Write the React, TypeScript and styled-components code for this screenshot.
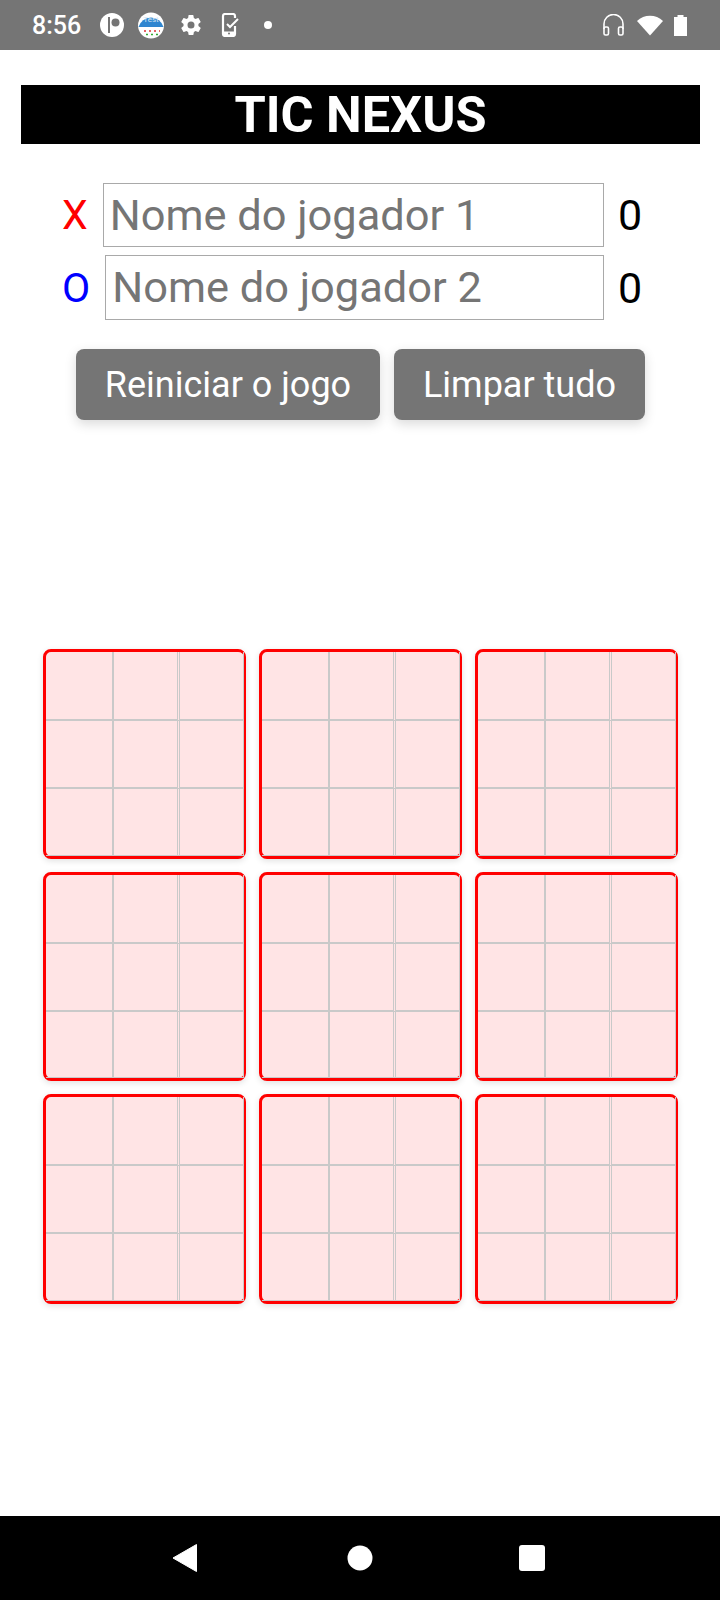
import React from 'react';
import styled, { createGlobalStyle } from 'styled-components';

const GlobalStyle = createGlobalStyle`
  html, body {
    margin: 0;
    padding: 0;
    background: #fff;
    font-family: Roboto, "Liberation Sans", sans-serif;
  }
  * { box-sizing: border-box; }
`;

const Screen = styled.div`
  width: 720px;
  height: 1600px;
  display: flex;
  flex-direction: column;
  overflow: hidden;
`;

const StatusBar = styled.div`
  height: 50px;
  flex: none;
  background: #757575;
  color: #fff;
  display: flex;
  align-items: center;
  padding: 0 33px 0 32px;
`;

const Clock = styled.span`
  width: 68px;
  font-size: 25px;
  font-weight: 500;
`;

const NotifIcons = styled.div`
  display: flex;
  align-items: center;
  gap: 14px;
`;

const SystemIcons = styled.div`
  display: flex;
  align-items: center;
  gap: 11px;
  margin-left: auto;
`;

const Main = styled.main`
  flex: 1;
  display: flex;
  flex-direction: column;
  padding-top: 35px;
`;

const Title = styled.h1`
  margin: 0 20px 0 21px;
  height: 59px;
  background: #000;
  color: #fff;
  font-size: 50.5px;
  font-weight: 700;
  line-height: 59px;
  text-align: center;
`;

const Players = styled.div`
  margin-top: 39px;
  display: flex;
  flex-direction: column;
  gap: 8px;
`;

const PlayerRow = styled.div`
  display: flex;
  align-items: center;
  padding-left: 62px;
`;

const Mark = styled.span<{ $color: string }>`
  color: ${({ $color }) => $color};
  font-size: 41px;
  line-height: 50px;
  margin-right: 15px;
`;

const NameInput = styled.input<{ $height: number }>`
  height: ${({ $height }) => $height}px;
  flex: 1;
  min-width: 0;
  border: 1px solid #a9a9a9;
  border-radius: 0;
  padding: 0 6px;
  outline: none;
  font-family: inherit;
  font-size: 43.4px;
  color: #000;
  &::placeholder { color: #757575; opacity: 1; }
`;

const Score = styled.span`
  flex: none;
  width: 102px;
  margin-left: 14px;
  font-size: 43px;
  line-height: 50px;
  color: #000;
`;

const Actions = styled.div`
  margin-top: 29px;
  padding-left: 76px;
  display: flex;
  gap: 14px;
`;

const ActionButton = styled.button<{ $width: number }>`
  width: ${({ $width }) => $width}px;
  height: 71px;
  background: #757575;
  color: #fff;
  border: none;
  border-radius: 8px;
  font-family: inherit;
  font-size: 36px;
  padding: 0;
  box-shadow: 0 4px 12px rgba(0, 0, 0, 0.15);
`;

const Boards = styled.div`
  margin-top: 229px;
  padding-left: 43px;
  display: grid;
  grid-template-columns: repeat(3, 203px);
  grid-auto-rows: 209.5px;
  column-gap: 13px;
  row-gap: 13px;
`;

const Board = styled.div`
  border: 3px solid #f00;
  border-right-width: 2px;
  border-radius: 8px;
  background: #ffe4e5;
  display: grid;
  grid-template-columns: 68px 66px 1fr;
  grid-template-rows: 69px 68px 1fr;
  box-shadow: 0 2px 6px rgba(0, 0, 0, 0.12);
`;

const colBorder = ['2px solid #c9c9c9', '3px double #c9c9c9', '1px solid #c9c9c9'];

const Cell = styled.div<{ $col: number; $row: number }>`
  border-right: ${({ $col }) => colBorder[$col]};
  border-bottom: ${({ $row }) => ($row < 2 ? '2px solid #c9c9c9' : '1px solid #c9c9c9')};
`;

const NavBar = styled.nav`
  height: 84px;
  flex: none;
  background: #000;
  display: flex;
  align-items: center;
  padding-left: 172px;
  gap: 145px;
`;

const cells = Array.from({ length: 9 }, (_, i) => i);

const App: React.FC = () => (
  <Screen>
    <GlobalStyle />
    <StatusBar>
      <Clock>8:56</Clock>
      <NotifIcons>
        <svg width="24" height="24" viewBox="0 0 24 24">
          <circle cx="12" cy="12" r="12" fill="#fff" />
          <path d="M9 4v16" stroke="#757575" strokeWidth="2" />
          <circle cx="15.500" cy="9.500" r="4" fill="#757575" />
        </svg>
        <svg width="26" height="27" viewBox="0 0 26 27">
          <circle cx="13" cy="13.500" r="13" fill="#fff" />
          <path d="M0.500 15 A13 13 0 0 1 25.500 15 Z" fill="#2f86d0" />
          <text x="13" y="10" fontSize="8" textAnchor="middle" fill="#d5e6f5" fontFamily="Roboto, sans-serif">Test</text>
          <path d="M6 19h2M11 19h2M16 19h2M21 19h1" stroke="#d33" strokeWidth="1.500" />
          <path d="M8 22.500h2M13 22.500h2M18 22.500h2" stroke="#3a3" strokeWidth="1.500" />
        </svg>
        <svg width="26" height="24" viewBox="-1 0 26 24" fill="#fff">
          <path d="M19.400 13c.04-.3.06-.65.06-1s-.02-.7-.07-1l2.100-1.650c.2-.15.24-.43.12-.64l-2-3.460c-.12-.22-.39-.3-.61-.22l-2.490 1c-.52-.4-1.080-.73-1.690-.98l-.38-2.650A.49.49 0 0 0 14 2h-4c-.25 0-.46.18-.49.42l-.38 2.650c-.61.25-1.170.59-1.690.98l-2.490-1a.5.5 0 0 0-.61.22l-2 3.460c-.13.22-.07.49.12.64L4.570 11c-.05.3-.07.67-.07 1s.02.7.07 1l-2.110 1.650c-.2.15-.24.43-.12.64l2 3.460c.12.22.39.3.61.22l2.490-1c.52.4 1.080.73 1.690.98l.38 2.650c.03.24.24.42.49.42h4c.25 0 .46-.18.49-.42l.38-2.650c.61-.25 1.170-.59 1.690-.98l2.490 1c.23.08.49 0 .61-.22l2-3.460c.12-.22.07-.49-.12-.64L19.400 13zM12 15.500a3.500 3.500 0 1 1 0-7 3.500 3.500 0 0 1 0 7z" />
        </svg>
        <svg width="22" height="24" viewBox="0 0 22 24" fill="none">
          <path d="M17 5V3a2 2 0 0 0-2-2H7a2 2 0 0 0-2 2v18a2 2 0 0 0 2 2h8a2 2 0 0 0 2-2v-8" stroke="#fff" strokeWidth="2.200" />
          <path d="M5 18.500h12V22H5z" fill="#fff" />
          <path d="M9 11l3 3 8-8" stroke="#fff" strokeWidth="2" />
          <circle cx="11" cy="20.500" r="1" fill="#757575" />
        </svg>
        <svg width="28" height="10" viewBox="0 0 28 10">
          <circle cx="14" cy="5" r="4" fill="#fff" />
        </svg>
      </NotifIcons>
      <SystemIcons>
        <svg width="24" height="22" viewBox="0 0 24 22" fill="none">
          <path d="M2 15v-5a9.500 9.500 0 0 1 19 0v5" stroke="#fff" strokeWidth="1.600" />
          <rect x="2" y="13" width="4.500" height="8" rx="1.500" stroke="#fff" strokeWidth="1.600" />
          <rect x="16.500" y="13" width="4.500" height="8" rx="1.500" stroke="#fff" strokeWidth="1.600" />
        </svg>
        <svg width="26" height="22" viewBox="0 0 26 22">
          <path d="M0 7 C7 0 19 0 26 7 L13 21.500 Z" fill="#fff" />
        </svg>
        <svg width="13" height="21" viewBox="0 0 13 21">
          <path d="M3.500 0h6v2H13v19H0V2h3.500z" fill="#fff" />
        </svg>
      </SystemIcons>
    </StatusBar>
    <Main>
      <Title>TIC NEXUS</Title>
      <Players>
        <PlayerRow>
          <Mark $color="#f00">X</Mark>
          <NameInput $height={64} placeholder="Nome do jogador 1" />
          <Score>0</Score>
        </PlayerRow>
        <PlayerRow>
          <Mark $color="#00f">O</Mark>
          <NameInput $height={65} placeholder="Nome do jogador 2" />
          <Score>0</Score>
        </PlayerRow>
      </Players>
      <Actions>
        <ActionButton $width={304}>Reiniciar o jogo</ActionButton>
        <ActionButton $width={251}>Limpar tudo</ActionButton>
      </Actions>
      <Boards>
        {cells.map((b) => (
          <Board key={b}>
            {cells.map((c) => (
              <Cell key={c} $col={c % 3} $row={Math.floor(c / 3)} />
            ))}
          </Board>
        ))}
      </Boards>
    </Main>
    <NavBar>
      <svg width="30" height="30" viewBox="0 0 30 30">
        <path d="M24.500 1.500 L1 15 L24.500 28.500 Z" fill="#fff" stroke="#fff" strokeLinejoin="round" />
      </svg>
      <svg width="26" height="26" viewBox="0 0 26 26">
        <circle cx="13" cy="13" r="12.500" fill="#fff" />
      </svg>
      <svg width="28" height="28" viewBox="0 0 28 28">
        <rect x="1" y="1" width="26" height="26" rx="3" fill="#fff" />
      </svg>
    </NavBar>
  </Screen>
);

export default App;
